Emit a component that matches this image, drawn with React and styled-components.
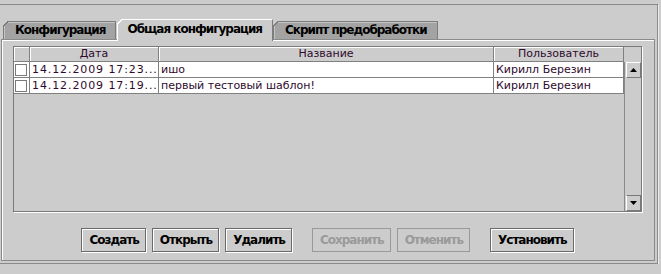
import React from "react";
import styled, { createGlobalStyle } from "styled-components";

const GlobalStyle = createGlobalStyle`
  html, body {
    margin: 0;
    padding: 0;
    background: #cccccc;
  }
  body {
    font-family: "DejaVu Sans", "Liberation Sans", sans-serif;
    font-size: 11px;
  }
`;

const Frame = styled.div`
  box-sizing: border-box;
  margin-top: 4px;
  width: 658px;
  height: 260px;
  padding-top: 14px;
  border-top: 1px solid #8a8a8a;
  border-right: 1px solid #8a8a8a;
  border-bottom: 1px solid #8a8a8a;
  box-shadow: 1px 1px 0 #ececec;
`;

const TabStrip = styled.div`
  display: flex;
  align-items: flex-end;
  height: 20px;
  padding-left: 3px;
  position: relative;
  z-index: 1;
`;

const Tab = styled.div`
  position: relative;
  box-sizing: border-box;
  height: ${p => (p.$active ? "22px" : "18px")};
  margin-bottom: ${p => (p.$active ? "-2px" : "0")};
  margin-left: ${p => (p.$active ? "1px" : "0")};
  padding: ${p => (p.$active ? "2px 10px 0 9px" : "1px 10px 0 11px")};
  line-height: 15px;
  font-size: 12px;
  font-weight: bold;
  letter-spacing: -1px;
  color: #000;
  white-space: nowrap;
  background: ${p => (p.$active ? "#cccccc" : "#a3a3a3")};
  border-top: 1px solid ${p => (p.$active ? "#ffffff" : "#7c7c7c")};
  border-left: 1px solid ${p => (p.$active ? "#ffffff" : "#7c7c7c")};
  border-right: 1px solid #7c7c7c;
  box-shadow: ${p => (p.$active ? "none" : "inset 1px 1px 0 #c4c4c4")};

  &::before {
    content: "";
    position: absolute;
    left: -1px;
    top: -1px;
    width: 5px;
    height: 5px;
    background: linear-gradient(
      135deg,
      #cccccc 0 48%,
      ${p => (p.$active ? "#ffffff" : "#7c7c7c")} 48% 66%,
      transparent 66%
    );
  }
`;

const Panel = styled.div`
  box-sizing: border-box;
  margin-left: 1px;
  width: 654px;
  height: 222px;
  border: 1px solid #8a8a8a;
  box-shadow: inset 1px 1px 0 #ffffff;
  padding: 6px 12px 0 11px;
`;

const ScrollPane = styled.div`
  box-sizing: border-box;
  height: 166px;
  border: 1px solid #7a7a7a;
  box-shadow: 1px 1px 0 #ffffff;
  display: flex;
`;

const Table = styled.div`
  display: grid;
  grid-template-columns: 16px 129px 335px 130px;
  grid-auto-rows: 16px;
  grid-template-rows: 15px;
  align-content: start;
  color: #2e0a2e;
`;

const HeaderCell = styled.div`
  box-sizing: border-box;
  border-right: 1px solid #808080;
  border-bottom: 1px solid #808080;
  box-shadow: inset 1px 1px 0 #ffffff;
  background: #cccccc;
  text-align: center;
  line-height: 14px;
  white-space: nowrap;
  overflow: hidden;
`;

const Cell = styled.div`
  box-sizing: border-box;
  border-right: 1px solid #808080;
  border-bottom: 1px solid #808080;
  background: #ffffff;
  padding-left: ${p => (p.$check ? "1px" : "2px")};
  letter-spacing: ${p => (p.$wide ? "0.9px" : "0")};
  line-height: 15px;
  white-space: nowrap;
  overflow: hidden;
  display: ${p => (p.$check ? "flex" : "block")};
  align-items: center;
`;

const CheckBox = styled.span`
  box-sizing: border-box;
  display: block;
  width: 12px;
  height: 12px;
  border: 1px solid #7a7a7a;
  background: #ffffff;
`;

const ScrollBar = styled.div`
  width: 17px;
  display: flex;
  flex-direction: column;
  padding-top: 15px;
`;

const ScrollTrack = styled.div`
  flex: 1;
  display: flex;
  flex-direction: column;
  justify-content: space-between;
  border-left: 1px solid #8a8a8a;
  padding-left: 1px;
`;

const ArrowButton = styled.div`
  box-sizing: border-box;
  height: 16px;
  background: #cccccc;
  border-top: 1px solid ${p => (p.$down ? "#7a7a7a" : "#ffffff")};
  border-left: 1px solid #ffffff;
  border-right: 1px solid #7a7a7a;
  border-bottom: 1px solid #7a7a7a;
  display: flex;
  align-items: center;
  justify-content: center;
`;

const ButtonRow = styled.div`
  display: flex;
  justify-content: center;
  margin-top: 16px;
  gap: 20px;
`;

const ButtonGroup = styled.div`
  display: flex;
  gap: 6px;
`;

const Button = styled.button`
  box-sizing: border-box;
  height: 24px;
  padding: 0 6px 0 7px;
  margin: 0;
  font-family: inherit;
  font-size: 12px;
  font-weight: bold;
  letter-spacing: -1px;
  background: #cccccc;
  color: ${p => (p.disabled ? "#9a9a9a" : "#000000")};
  border: 1px solid ${p => (p.disabled ? "#999999" : "#6a6a6a")};
  box-shadow: ${p =>
    p.disabled ? "none" : "inset 1px 1px 0 #ffffff, 1px 1px 0 #ffffff"};
  border-radius: 0;
`;

const Arrow = ({ down }) => (
  <svg width="7" height="4" viewBox="0 0 7 4">
    <path d={down ? "M0 0H7L3.5 4Z" : "M0 4H7L3.5 0Z"} fill="#000" />
  </svg>
);

const rows = [
  { date: "14.12.2009 17:23...", name: "ишо", user: "Кирилл Березин" },
  {
    date: "14.12.2009 17:19...",
    name: "первый тестовый шаблон!",
    user: "Кирилл Березин"
  }
];

export default function App() {
  return (
    <>
      <GlobalStyle />
      <Frame>
        <TabStrip>
          <Tab>Конфигурация</Tab>
          <Tab $active>Общая конфигурация</Tab>
          <Tab>Скрипт предобработки</Tab>
        </TabStrip>
        <Panel>
          <ScrollPane>
            <Table>
              <HeaderCell />
              <HeaderCell>Дата</HeaderCell>
              <HeaderCell>Название</HeaderCell>
              <HeaderCell>Пользователь</HeaderCell>
              {rows.map((r, i) => (
                <React.Fragment key={i}>
                  <Cell $check>
                    <CheckBox />
                  </Cell>
                  <Cell $wide>{r.date}</Cell>
                  <Cell>{r.name}</Cell>
                  <Cell>{r.user}</Cell>
                </React.Fragment>
              ))}
            </Table>
            <ScrollBar>
              <ScrollTrack>
                <ArrowButton>
                  <Arrow />
                </ArrowButton>
                <ArrowButton $down>
                  <Arrow down />
                </ArrowButton>
              </ScrollTrack>
            </ScrollBar>
          </ScrollPane>
          <ButtonRow>
            <ButtonGroup>
              <Button>Создать</Button>
              <Button>Открыть</Button>
              <Button>Удалить</Button>
            </ButtonGroup>
            <ButtonGroup>
              <Button disabled>Сохранить</Button>
              <Button disabled>Отменить</Button>
            </ButtonGroup>
            <ButtonGroup>
              <Button>Установить</Button>
            </ButtonGroup>
          </ButtonRow>
        </Panel>
      </Frame>
    </>
  );
}
